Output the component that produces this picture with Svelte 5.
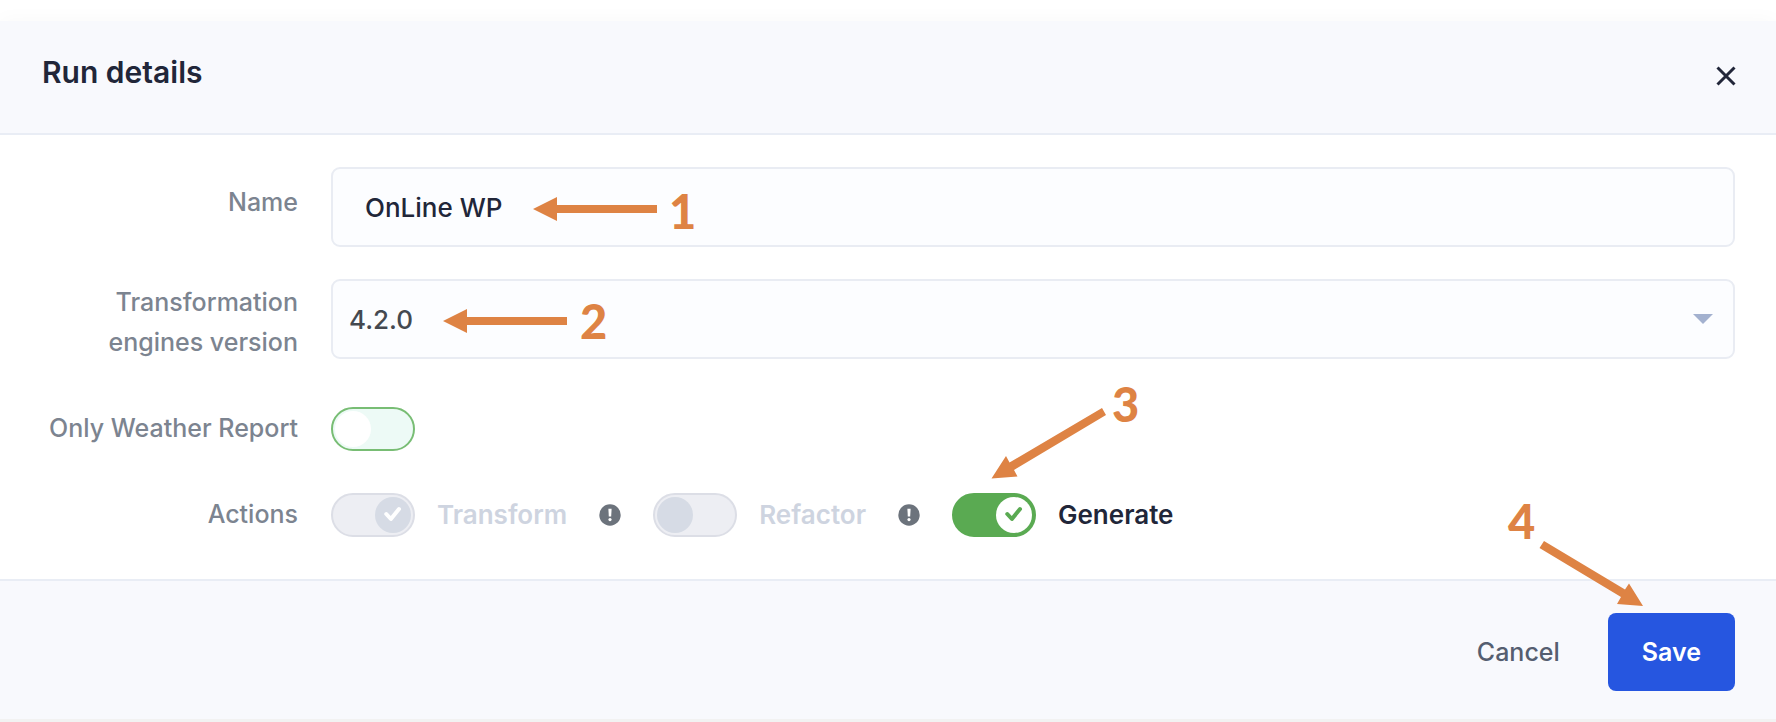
<script>
  let name = $state('OnLine WP');
  let version = $state('4.2.0');
  let weatherOnly = $state(false);
  let actions = $state([
    { id: 'transform', label: 'Transform', on: true, disabled: true },
    { id: 'refactor', label: 'Refactor', on: false, disabled: true },
    { id: 'generate', label: 'Generate', on: true, disabled: false }
  ]);
</script>

{#snippet knob(on)}
  <svg class="knob" class:on viewBox="0 0 36 36" aria-hidden="true">
    <circle cx="18" cy="18" r="18" />
    {#if on}<path d="M11.3 17 15.9 22 24 12" />{/if}
  </svg>
{/snippet}

<div class="modal">
  <header>
    <h1>Run details</h1>
    <button class="close" type="button" aria-label="Close">
      <svg viewBox="0 0 20 20"><path d="M1.5 1.5 18.5 18.5M18.5 1.5 1.5 18.5" /></svg>
    </button>
  </header>

  <form id="run">
    <div class="row field">
      <label class="name" for="name">Name</label>
      <input class="control" id="name" type="text" bind:value={name} />
    </div>
    <div class="row field">
      <label class="name two" for="version">Transformation engines version</label>
      <div class="pick">
        <select class="control" id="version" bind:value={version}>
          <option>4.2.0</option>
        </select>
        <svg viewBox="0 0 20 10" aria-hidden="true"><path d="M0 0H20L10 10Z" /></svg>
      </div>
    </div>
    <div class="row">
      <label class="name" for="weather">Only Weather Report</label>
      <span class="switch">
        <input id="weather" type="checkbox" bind:checked={weatherOnly} />
        {@render knob(weatherOnly)}
      </span>
    </div>
    <div class="row">
      <span class="name">Actions</span>
      <div class="actions">
        {#each actions as a}
          <div class="action" class:disabled={a.disabled}>
            <span class="switch">
              <input id={a.id} type="checkbox" bind:checked={a.on} disabled={a.disabled} />
              {@render knob(a.on)}
            </span>
            <label for={a.id}>{a.label}</label>
          </div>
          {#if a.disabled}
            <svg class="info" viewBox="0 0 22 22" aria-hidden="true">
              <circle cx="11" cy="11" r="10.7" />
              <path d="M9.4 4.8h3.2l-.4 7.8h-2.4z" />
              <circle class="dot" cx="11" cy="15.6" r="1.6" />
            </svg>
          {/if}
        {/each}
      </div>
    </div>
  </form>

  <footer>
    <button class="cancel" type="button">Cancel</button>
    <button class="save" type="submit" form="run">Save</button>
  </footer>

  <svg class="note n1" width="180" height="80" viewBox="0 -10 180 80">
    <path d="M3 29 27 17V25H127V33H27V41Z" />
    <text x="139" y="49">1</text>
  </svg>
  <svg class="note n2" width="180" height="80" viewBox="0 -10 180 80">
    <path d="M3 29 27 17V25H127V33H27V41Z" />
    <text x="140" y="47">2</text>
  </svg>
  <svg class="note n3" width="170" height="120" viewBox="0 -20 170 120">
    <path d="M1.5 97.5 16 75 19.5 81.5 112 27 116 34 24 89 27.5 95.5Z" />
    <text x="122" y="41">3</text>
  </svg>
  <svg class="note n4" width="160" height="130" viewBox="-20 -20 160 130">
    <path d="M135 106 121 83.500 117 89.500 36 41 31.500 48 113 97 109 104Z" />
    <text x="0" y="39">4</text>
  </svg>
</div>

<style>
  :global(body) {
    background: #fff;
    font-family: Inter, sans-serif;
  }
  .modal {
    position: relative;
    margin-top: 21px;
    border-bottom: 3px solid #f2f2f2;
    box-shadow: 0 0 20px rgba(0, 0, 0, 0.03);
    background: #fff;
    color: #212639;
  }
  header,
  footer {
    box-sizing: border-box;
    display: flex;
    align-items: center;
    background: #f8f9fd;
    border: 0 solid #e9edf5;
  }
  header {
    justify-content: space-between;
    padding: 31px 40px 41px 42px;
    border-bottom-width: 2px;
  }
  h1 {
    margin: 0;
    font-size: 30px;
    line-height: 40px;
    font-weight: 600;
  }
  button,
  input,
  select {
    font: inherit;
    color: inherit;
    margin: 0;
  }
  button {
    border: 0;
    background: none;
    padding: 0;
    cursor: pointer;
  }
  .close {
    display: grid;
    padding-top: 8px;
  }
  .close svg {
    width: 20px;
    height: 20px;
    fill: none;
    stroke: #212639;
    stroke-width: 3;
  }
  form {
    padding: 32px 41px 42px 0;
    display: grid;
    gap: 42px;
    font-size: 26px;
    line-height: 40px;
    font-weight: 500;
  }
  .row {
    display: grid;
    grid-template-columns: 298px minmax(0, 1fr);
    column-gap: 33px;
  }
  .field {
    margin-bottom: -10px;
  }
  .field + .row:not(.field) {
    margin-top: 16px;
  }
  .name {
    text-align: right;
    color: #7c8490;
    font-size: 25px;
    padding-top: 1px;
    padding-left: 40px;
  }
  .field .name {
    padding-top: 15px;
  }
  .field .two {
    padding: 3px 0 0 100px;
    margin-bottom: -3px;
  }
  .control {
    box-sizing: border-box;
    display: block;
    width: 100%;
    height: 80px;
    border: 2px solid #e9ecf3;
    border-radius: 9px;
    background: #fcfdff;
    padding: 0 32px;
    appearance: none;
  }
  select.control {
    padding: 2px 16px 0;
    color: #444950;
  }
  .pick {
    display: grid;
    align-items: center;
  }
  .pick > * {
    grid-area: 1 / 1;
  }
  .pick svg {
    width: 20px;
    height: 10px;
    justify-self: end;
    margin-right: 22px;
    fill: #a3b1cf;
    pointer-events: none;
  }
  .switch {
    display: grid;
    width: 84px;
    height: 44px;
    align-items: center;
  }
  .switch > * {
    grid-area: 1 / 1;
  }
  .switch input {
    appearance: none;
    box-sizing: border-box;
    width: 84px;
    height: 44px;
    border: 2px solid #78bd74;
    border-radius: 22px;
    background: #edfaf6;
  }
  .switch input:checked {
    background: #5aaa52;
    border-color: #5aaa52;
  }
  .switch input:disabled {
    background: #edeef3;
    border-color: #dcdee6;
  }
  .knob {
    width: 36px;
    height: 36px;
    margin: 0 4px;
    fill: #fff;
    pointer-events: none;
  }
  .knob.on {
    justify-self: end;
  }
  .knob path {
    fill: none;
    stroke: #5aaa52;
    stroke-width: 4;
    stroke-linecap: round;
    stroke-linejoin: round;
  }
  .disabled .knob {
    fill: #d6dbe5;
  }
  .disabled .knob path {
    stroke: #fff;
  }
  .actions,
  .action {
    display: flex;
    align-items: center;
  }
  .actions {
    gap: 32px;
  }
  .action {
    gap: 22px;
    font-weight: 600;
    font-size: 26px;
  }
  .disabled label {
    color: #ced4e0;
  }
  .info {
    width: 22px;
    height: 22px;
    fill: #6c737c;
  }
  .info path,
  .info .dot {
    fill: #fff;
  }
  footer {
    justify-content: flex-end;
    gap: 48px;
    padding: 32px 41px 28px;
    border-top-width: 2px;
    font-size: 25px;
    line-height: 30px;
  }
  .cancel {
    font-weight: 500;
    color: #555e70;
  }
  .save {
    padding: 24px 34px;
    border-radius: 8px;
    background: #2656e0;
    color: #fff;
    font-weight: 600;
  }
  .note {
    position: absolute;
    fill: #de8344;
    font: 900 47px Lato, sans-serif;
    pointer-events: none;
  }
  .n1 {
    left: 530px;
    top: 149px;
  }
  .n2 {
    left: 440px;
    top: 261px;
  }
  .n3 {
    left: 990px;
    top: 340px;
  }
  .n4 {
    right: 128px;
    top: 459px;
  }
</style>
